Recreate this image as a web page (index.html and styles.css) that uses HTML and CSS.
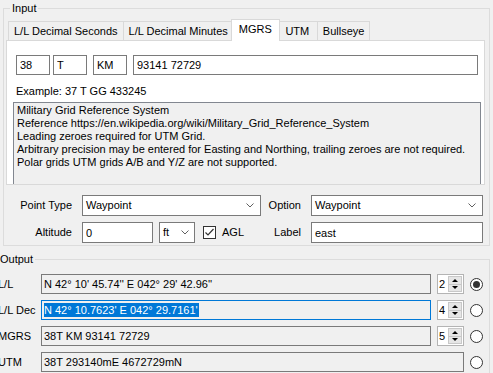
FILE: index.html
```html
<!DOCTYPE html>
<html lang="en">
<head>
    <meta charset="UTF-8">
    <title>Coordinate Converter</title>
    <link rel="stylesheet" href="styles.css">
</head>
<body>
    <div class="window">
        <fieldset class="group group-input">
            <legend>Input</legend>

            <div class="tabs">
                <div class="tab">L/L Decimal Seconds</div>
                <div class="tab">L/L Decimal Minutes</div>
                <div class="tab active">MGRS</div>
                <div class="tab">UTM</div>
                <div class="tab">Bullseye</div>
            </div>

            <div class="tab-page">
                <div class="mgrs-row">
                    <input class="field zone" value="38">
                    <input class="field band" value="T">
                    <input class="field square" value="KM">
                    <input class="field grid-ref" value="93141 72729">
                </div>
                <div class="example">Example: 37 T GG 433245</div>
                <div class="notes">
                    <div>Military Grid Reference System</div>
                    <div>Reference https://en.wikipedia.org/wiki/Military_Grid_Reference_System</div>
                    <div>Leading zeroes required for UTM Grid.</div>
                    <div>Arbitrary precision may be entered for Easting and Northing, trailing zeroes are not required.</div>
                    <div>Polar grids UTM grids A/B and Y/Z are not supported.</div>
                </div>
            </div>

            <div class="point-form">
                <label class="form-label">Point Type</label>
                <div class="select">
                    <span>Waypoint</span>
                    <svg class="chevron" width="8" height="5" viewBox="0 0 8 5"><polyline points="0.5,0.5 4,4 7.5,0.5" /></svg>
                </div>
                <label class="form-label">Option</label>
                <div class="select">
                    <span>Waypoint</span>
                    <svg class="chevron" width="8" height="5" viewBox="0 0 8 5"><polyline points="0.5,0.5 4,4 7.5,0.5" /></svg>
                </div>

                <label class="form-label">Altitude</label>
                <div class="altitude">
                    <input class="field altitude-value" value="0">
                    <div class="select unit">
                        <span>ft</span>
                        <svg class="chevron" width="8" height="5" viewBox="0 0 8 5"><polyline points="0.5,0.5 4,4 7.5,0.5" /></svg>
                    </div>
                    <span class="checkbox checked">
                        <svg width="11" height="11" viewBox="0 0 11 11"><polyline points="1.5,5.5 4,8 9.5,2" /></svg>
                    </span>
                    <span class="check-label">AGL</span>
                </div>
                <label class="form-label">Label</label>
                <input class="field" value="east">
            </div>
        </fieldset>

        <fieldset class="group group-output">
            <legend>Output</legend>
            <div class="output-grid">
                <span class="out-label">L/L</span>
                <div class="out-value">N 42° 10' 45.74'' E 042° 29' 42.96''</div>
                <div class="spin"><span class="spin-num">2</span><span class="spin-btns"><i class="up"></i><i class="down"></i></span></div>
                <span class="radio checked"></span>

                <span class="out-label">L/L Dec</span>
                <div class="out-value focused"><span class="selection">N 42° 10.7623' E 042° 29.7161'</span></div>
                <div class="spin"><span class="spin-num">4</span><span class="spin-btns"><i class="up"></i><i class="down"></i></span></div>
                <span class="radio"></span>

                <span class="out-label">MGRS</span>
                <div class="out-value">38T KM 93141 72729</div>
                <div class="spin"><span class="spin-num">5</span><span class="spin-btns"><i class="up"></i><i class="down"></i></span></div>
                <span class="radio"></span>

                <span class="out-label">UTM</span>
                <div class="out-value wide">38T 293140mE 4672729mN</div>
                <span class="radio"></span>
            </div>
        </fieldset>
    </div>
</body>
</html>
```

FILE: styles.css
```css
* {
    margin: 0;
    padding: 0;
    box-sizing: border-box;
}

body {
    font-family: 'Liberation Sans', Arial, sans-serif;
    font-size: 11px;
    line-height: 13px;
    background: #f0f0f0;
    color: #000;
    overflow: hidden;
}

.window {
    width: 493px;
    height: 373px;
    padding: 2px 3px 0 3px;
}

.group {
    border: 1px solid #dcdcdc;
    min-width: 0;
}

.group legend {
    margin-left: 4px;
    padding: 0 2px;
    line-height: 13px;
}

.group-input {
    padding: 4px 4px 2px 2px;
}

/* tabs */
.tabs {
    display: flex;
    align-items: flex-end;
    height: 21px;
    padding-left: 2px;
}

.tab {
    min-width: 41px;
    height: 19px;
    padding: 0 5px;
    border: 1px solid #d9d9d9;
    border-bottom: none;
    margin-right: -1px;
    line-height: 18px;
    text-align: center;
    white-space: nowrap;
    background: #f0f0f0;
}

.tab.active {
    position: relative;
    z-index: 1;
    height: 22px;
    margin: 0 -3px -1px -2px;
    padding: 0 7px;
    line-height: 18px;
    background: #fff;
}

.tab-page {
    height: 145px;
    background: #fff;
    border: 1px solid #d9d9d9;
    padding: 14px 3px 0 6px;
    overflow: hidden;
}

.field {
    height: 20px;
    border: 1px solid #7a7a7a;
    background: #fff;
    padding: 0 3px;
    font: inherit;
    color: #000;
    outline: none;
}

.mgrs-row {
    display: flex;
    margin-left: 3px;
}

.mgrs-row .zone,
.mgrs-row .band,
.mgrs-row .square {
    width: 34px;
}

.mgrs-row .band {
    margin-left: 3px;
}

.mgrs-row .square {
    margin-left: 6px;
}

.mgrs-row .grid-ref {
    width: 345px;
    margin-left: 6px;
}

.example {
    margin: 10px 0 0 3px;
}

.notes {
    margin-top: 4px;
    width: 468px;
    height: 120px;
    border: 1px solid #828790;
    background: #f0f0f0;
    padding: 1px 3px;
}

/* point type / altitude form */
.point-form {
    display: grid;
    grid-template-columns: 65px 179px 30px 172px;
    grid-auto-rows: 21px;
    column-gap: 10px;
    row-gap: 6px;
    margin-top: 10px;
    margin-left: 1px;
    align-items: center;
}

.form-label {
    justify-self: end;
    white-space: nowrap;
}

.point-form .field {
    height: 21px;
}

.select {
    display: flex;
    align-items: center;
    justify-content: space-between;
    height: 21px;
    border: 1px solid #7a7a7a;
    background: #fff;
    padding: 0 6px 0 3px;
}

.chevron polyline {
    fill: none;
    stroke: #606060;
    stroke-width: 1;
}

.altitude {
    display: flex;
    align-items: center;
}

.altitude-value {
    width: 71px;
}

.select.unit {
    width: 36px;
    margin-left: 6px;
    padding-right: 5px;
}

.checkbox {
    display: inline-flex;
    align-items: center;
    justify-content: center;
    width: 13px;
    height: 13px;
    margin-left: 8px;
    border: 1px solid #333;
    background: #fff;
}

.checkbox polyline {
    fill: none;
    stroke: #333;
    stroke-width: 1.2;
}

.check-label {
    margin-left: 6px;
}

/* output */
.group-output {
    margin: 7px 0 0 -13px;
    padding: 8px 6px 0 7px;
    height: 130px;
    border-bottom: none;
}

.group-output legend {
    margin-left: 0;
}

.output-grid {
    display: grid;
    grid-template-columns: 37px 390px 27px 13px;
    grid-auto-rows: 20px;
    column-gap: 6px;
    row-gap: 6px;
    align-items: center;
}

.out-label {
    white-space: nowrap;
}

.out-value {
    height: 20px;
    border: 1px solid #7a7a7a;
    background: #f0f0f0;
    padding: 0 2px;
    line-height: 18px;
    white-space: nowrap;
}

.out-value.focused {
    border-color: #0078d7;
}

.out-value.wide {
    grid-column: span 2;
}

.selection {
    background: #0078d7;
    color: #fff;
    padding: 1px 1px 1px 0;
}

.spin {
    display: flex;
    height: 20px;
    border: 1px solid #b4b4b4;
    background: #fff;
}

.spin-num {
    flex: 1;
    padding-left: 1px;
    line-height: 18px;
}

.spin-btns {
    display: flex;
    flex-direction: column;
    width: 14px;
    margin: 1px 1px 1px 0;
    background: #e6e6e6;
    border: 1px solid #c8c8c8;
}

.spin-btns i {
    flex: 1;
    display: flex;
    align-items: center;
    justify-content: center;
}

.spin-btns i + i {
    border-top: 1px solid #c8c8c8;
}

.spin-btns i::before {
    content: '';
    border-left: 3px solid transparent;
    border-right: 3px solid transparent;
}

.spin-btns .up::before {
    border-bottom: 3px solid #000;
}

.spin-btns .down::before {
    border-top: 3px solid #000;
}

.radio {
    width: 13px;
    height: 13px;
    border: 1px solid #333;
    border-radius: 50%;
    background: #fff;
    display: flex;
    align-items: center;
    justify-content: center;
}

.radio.checked::before {
    content: '';
    width: 7px;
    height: 7px;
    border-radius: 50%;
    background: #333;
}
```
